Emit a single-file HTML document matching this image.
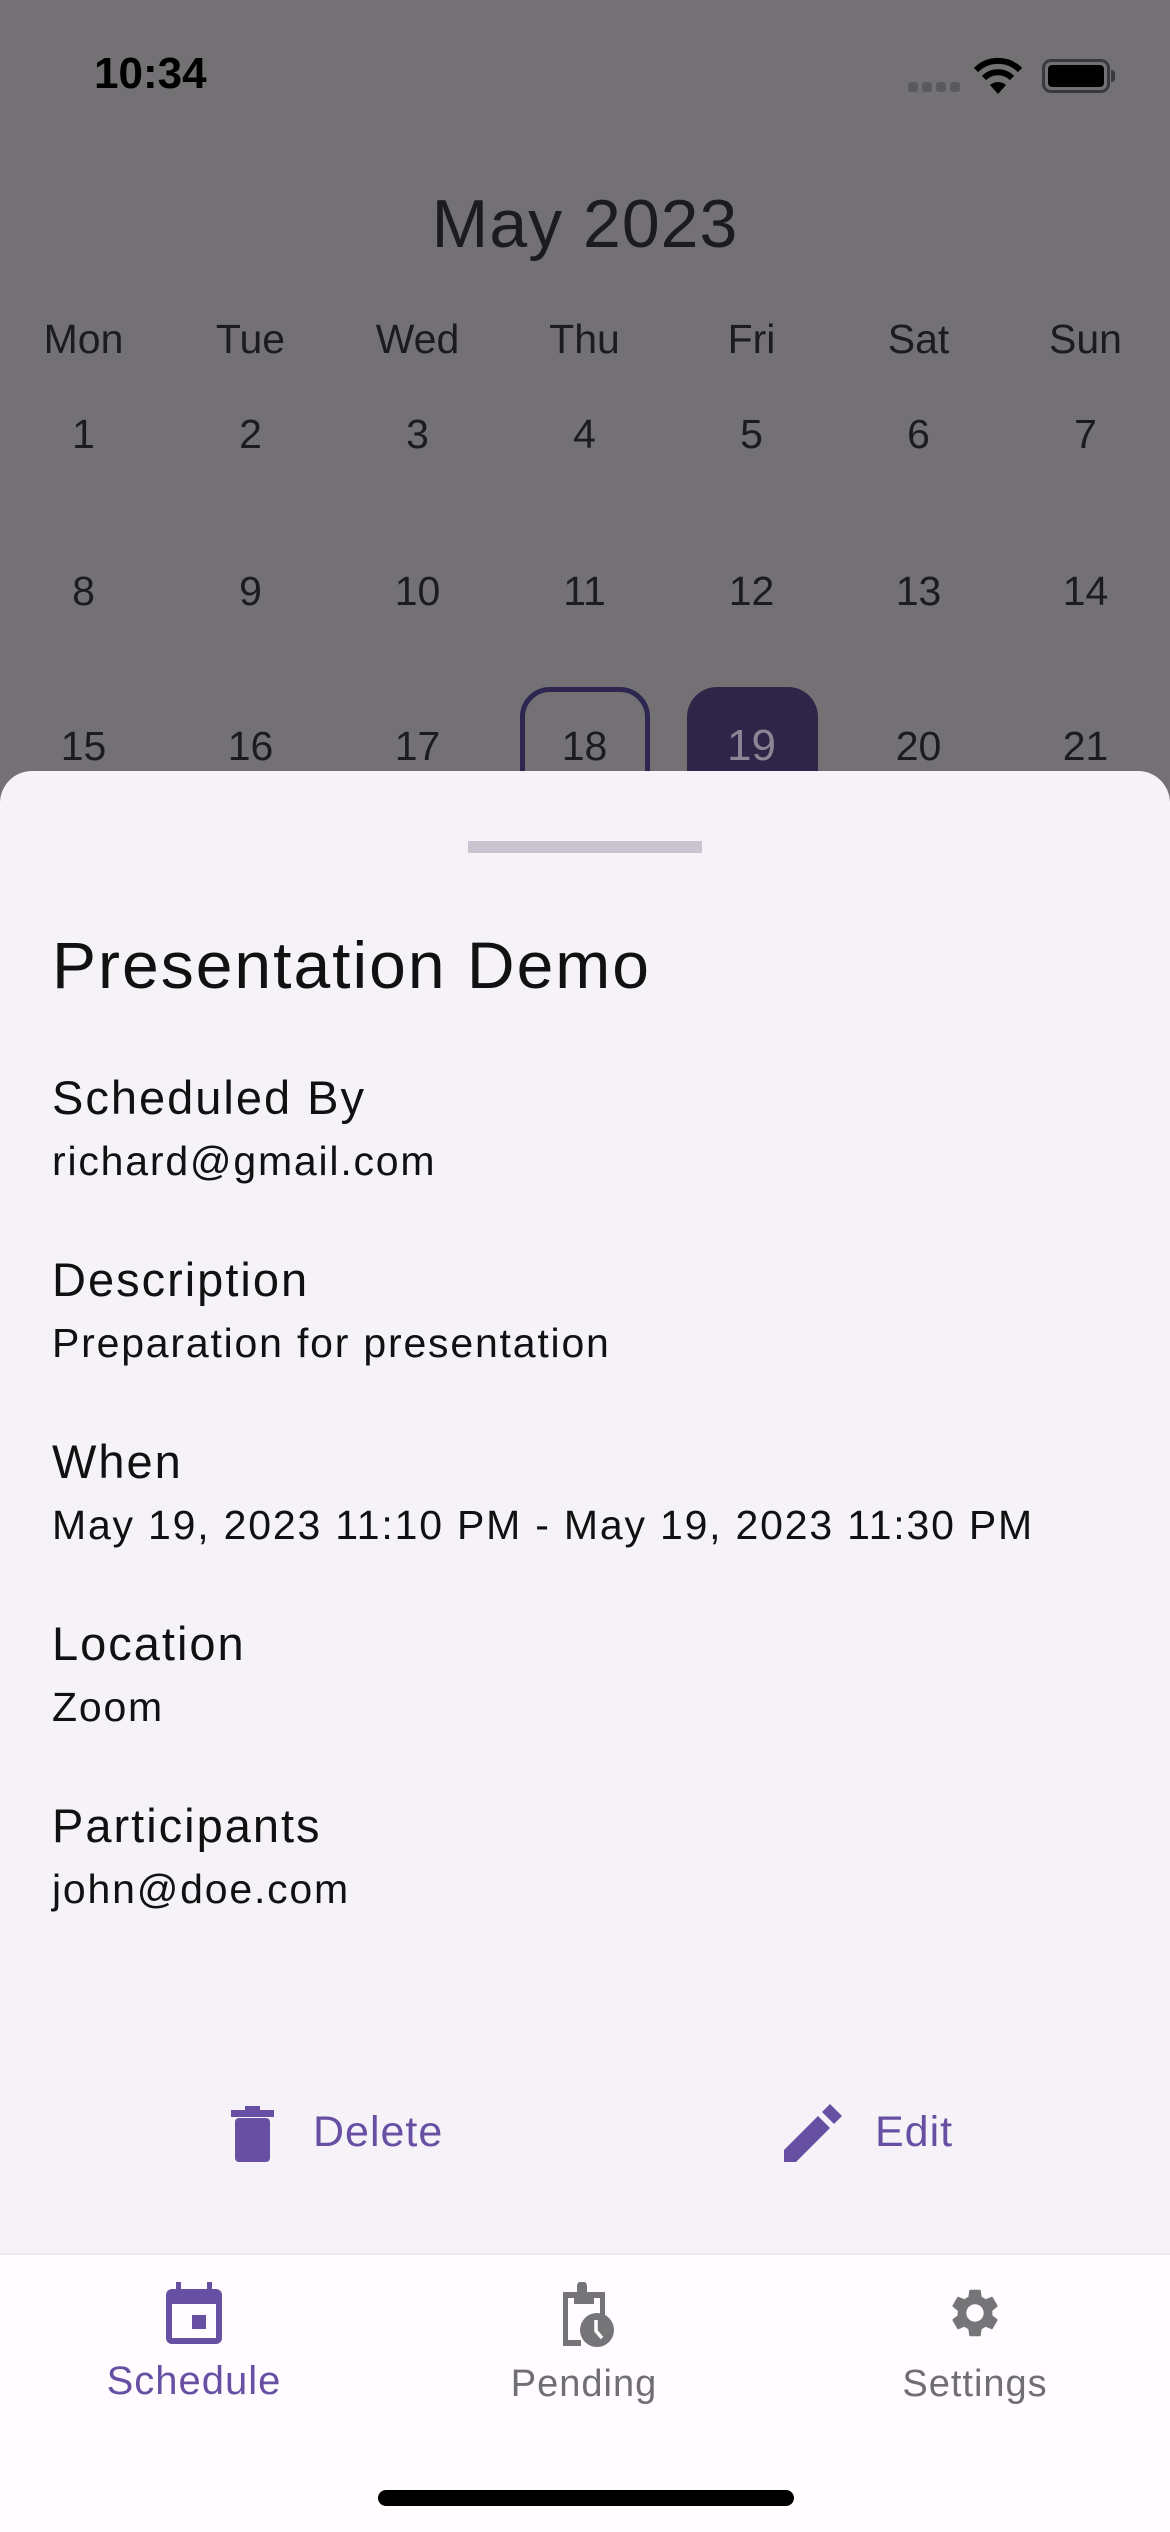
<!DOCTYPE html>
<html><head><meta charset="utf-8"><style>
*{margin:0;padding:0;box-sizing:border-box}
body{width:1170px;height:2532px;position:relative;overflow:hidden;background:#737174;font-family:"Liberation Sans",sans-serif;color:#1a191c}
.c{position:absolute;white-space:nowrap;line-height:1}
.cal{position:absolute;width:167px;text-align:center;font-size:41px;line-height:60px;color:#1c1b1f}
.sheet{position:absolute;left:0;top:771px;width:1170px;height:1500px;background:#f5f2f8;border-radius:32px 32px 0 0}
.lab{position:absolute;left:52px;font-size:47px;color:#111;letter-spacing:2px}
.val{position:absolute;left:52px;font-size:41px;color:#111;letter-spacing:1.8px}
.nav{position:absolute;left:0;top:2253px;width:1170px;height:279px;background:#fffbfe;border-top:2px solid #eee9ef}
.nl{position:absolute;width:300px;text-align:center;font-size:38px;letter-spacing:1px}
</style></head><body>
<div class="c" style="left:94px;top:52px;font-size:44px;font-weight:bold;color:#000">10:34</div>
<div style="position:absolute;left:908px;top:82px;width:52px;height:10px;display:flex;gap:4px">
<i style="width:10px;height:10px;background:#5a595c;border-radius:3px"></i><i style="width:10px;height:10px;background:#5a595c;border-radius:3px"></i><i style="width:10px;height:10px;background:#5a595c;border-radius:3px"></i><i style="width:10px;height:10px;background:#5a595c;border-radius:3px"></i></div>
<svg style="position:absolute;left:972px;top:56px" width="52" height="40" viewBox="0 0 52 40"><path d="M26 38 L18 29 A12 12 0 0 1 34 29 Z" fill="#000"/><path d="M12 22 A20 20 0 0 1 40 22" stroke="#000" stroke-width="6" fill="none"/><path d="M4 14 A31 31 0 0 1 48 14" stroke="#000" stroke-width="6" fill="none"/></svg>
<div style="position:absolute;left:1042px;top:59px;width:68px;height:34px;border:3px solid #3a393c;border-radius:9px;padding:3px"><div style="width:100%;height:100%;background:#000;border-radius:4px"></div></div>
<div style="position:absolute;left:1111px;top:70px;width:4px;height:12px;background:#3a393c;border-radius:0 3px 3px 0"></div>

<div class="c" style="left:0;width:1170px;text-align:center;top:190px;font-size:68px;letter-spacing:1px;color:#1c1b1f">May 2023</div>
<div class="cal" style="left:0;top:309px">Mon</div><div class="cal" style="left:167px;top:309px">Tue</div><div class="cal" style="left:334px;top:309px">Wed</div><div class="cal" style="left:501px;top:309px">Thu</div><div class="cal" style="left:668px;top:309px">Fri</div><div class="cal" style="left:835px;top:309px">Sat</div><div class="cal" style="left:1002px;top:309px">Sun</div>
<div class="cal" style="left:0;top:404px">1</div><div class="cal" style="left:167px;top:404px">2</div><div class="cal" style="left:334px;top:404px">3</div><div class="cal" style="left:501px;top:404px">4</div><div class="cal" style="left:668px;top:404px">5</div><div class="cal" style="left:835px;top:404px">6</div><div class="cal" style="left:1002px;top:404px">7</div>
<div class="cal" style="left:0;top:561px">8</div><div class="cal" style="left:167px;top:561px">9</div><div class="cal" style="left:334px;top:561px">10</div><div class="cal" style="left:501px;top:561px">11</div><div class="cal" style="left:668px;top:561px">12</div><div class="cal" style="left:835px;top:561px">13</div><div class="cal" style="left:1002px;top:561px">14</div>
<div style="position:absolute;left:520px;top:687px;width:130px;height:140px;border:5px solid #2e2650;border-radius:30px"></div>
<div style="position:absolute;left:687px;top:687px;width:131px;height:140px;background:#2e2548;border-radius:30px"></div>
<div class="cal" style="left:0;top:716px">15</div><div class="cal" style="left:167px;top:716px">16</div><div class="cal" style="left:334px;top:716px">17</div><div class="cal" style="left:501px;top:716px">18</div><div class="cal" style="left:668px;top:716px;color:#8a8694;font-size:44px">19</div><div class="cal" style="left:835px;top:716px">20</div><div class="cal" style="left:1002px;top:716px">21</div>

<div class="sheet"></div>
<div style="position:absolute;left:468px;top:841px;width:234px;height:12px;background:#cac4d0"></div>
<div class="c" style="left:52px;top:932px;font-size:66px;letter-spacing:2px;color:#111">Presentation Demo</div>
<div class="lab" style="top:1070px">Scheduled By</div><div class="val" style="top:1138px">richard@gmail.com</div>
<div class="lab" style="top:1252px">Description</div><div class="val" style="top:1320px">Preparation for presentation</div>
<div class="lab" style="top:1434px">When</div><div class="val" style="top:1502px">May 19, 2023 11:10 PM - May 19, 2023 11:30 PM</div>
<div class="lab" style="top:1616px">Location</div><div class="val" style="top:1684px">Zoom</div>
<div class="lab" style="top:1798px">Participants</div><div class="val" style="top:1866px">john@doe.com</div>

<svg style="position:absolute;left:231px;top:2104px" width="43" height="58" viewBox="0 0 43 58"><rect x="0" y="6" width="43" height="7" fill="#6750a4"/><rect x="14" y="2" width="15" height="6" fill="#6750a4"/><rect x="4" y="14" width="35" height="44" rx="4" fill="#6750a4"/></svg>
<div class="c" style="left:313px;top:2111px;font-size:43px;color:#6750a4;letter-spacing:1px">Delete</div>
<svg style="position:absolute;left:784px;top:2104px" width="58" height="58" viewBox="0 0 58 58"><path d="M0 46 L0 58 L12 58 L46 24 L34 12 Z" fill="#6750a4"/><path d="M38 8 L46 0 L58 12 L50 20 Z" fill="#6750a4"/></svg>
<div class="c" style="left:875px;top:2111px;font-size:43px;color:#6750a4;letter-spacing:1px">Edit</div>

<div class="nav"></div>
<svg style="position:absolute;left:166px;top:2282px" width="56" height="62" viewBox="0 0 56 62"><rect x="10" y="0" width="5" height="10" fill="#6750a4"/><rect x="41" y="0" width="5" height="10" fill="#6750a4"/><rect x="0" y="7" width="56" height="55" rx="6" fill="#6750a4"/><rect x="6" y="22" width="44" height="34" fill="#fffbfe"/><rect x="26" y="33" width="14" height="14" fill="#6750a4"/></svg>
<div class="nl" style="left:44px;top:2359px;color:#6750a4;font-size:40px">Schedule</div>
<svg style="position:absolute;left:559px;top:2282px" width="56" height="66" viewBox="0 0 56 66"><path d="M4 10 H18 V4 A5 5 0 0 1 28 4 V10 H46 V36 H41 V16 H35 V22 H15 V16 H9 V58 H22 V64 H4 Z" fill="#757477"/><circle cx="38" cy="48" r="17" fill="#757477"/><path d="M37 38 V49 L43 56" stroke="#fffbfe" stroke-width="3.5" fill="none"/></svg>
<div class="nl" style="left:434px;top:2363px;color:#6f6e72">Pending</div>
<svg style="position:absolute;left:946px;top:2284px" width="58" height="58" viewBox="0 0 24 24"><path fill="#757477" d="M19.14 12.94c.04-.3.06-.61.06-.94 0-.32-.02-.64-.07-.94l2.030-1.58a.49.49 0 0 0 .12-.61l-1.92-3.32a.488.488 0 0 0-.59-.22l-2.39.96c-.5-.38-1.030-.7-1.62-.94l-.36-2.54a.484.484 0 0 0-.48-.41h-3.84c-.24 0-.43.17-.47.41l-.36 2.54c-.59.24-1.13.57-1.62.94l-2.39-.96c-.22-.08-.47 0-.59.22L2.74 8.87c-.12.21-.08.47.12.61l2.030 1.58c-.05.3-.09.63-.09.94s.02.64.07.94l-2.030 1.58a.49.49 0 0 0-.12.61l1.92 3.32c.12.22.37.29.59.22l2.39-.96c.5.38 1.030.7 1.62.94l.36 2.54c.05.24.24.41.48.41h3.84c.24 0 .44-.17.47-.41l.36-2.54c.59-.24 1.13-.56 1.62-.94l2.39.96c.22.08.47 0 .59-.22l1.92-3.32c.12-.22.07-.47-.12-.61l-2.010-1.58zM12 15.6c-1.98 0-3.6-1.62-3.6-3.6s1.62-3.6 3.6-3.6 3.6 1.62 3.6 3.6-1.62 3.6-3.6 3.6z"/></svg>
<div class="nl" style="left:825px;top:2363px;color:#6f6e72">Settings</div>
<div style="position:absolute;left:378px;top:2490px;width:416px;height:16px;background:#000;border-radius:8px"></div>
</body></html>
